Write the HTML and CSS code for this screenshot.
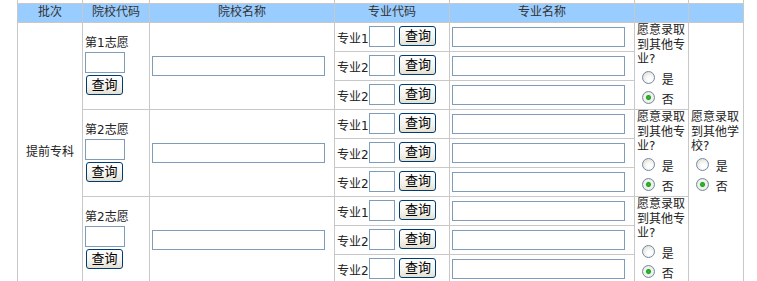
FILE: index.html
```html
<!DOCTYPE html>
<html lang="zh-CN">
<head>
  <meta charset="UTF-8">
  <title>志愿填报</title>
  <link rel="stylesheet" href="styles.css">
</head>
<body>

<div class="wrap">
<table class="form-table">
  <colgroup>
    <col class="c-batch">
    <col class="c-code">
    <col class="c-name">
    <col class="c-major">
    <col class="c-mname">
    <col class="c-adj">
    <col class="c-adj2">
  </colgroup>
  <tr class="gap"><td></td><td></td><td></td><td></td><td></td><td></td><td></td></tr>
  <tr class="head">
    <th>批次</th><th>院校代码</th><th>院校名称</th><th>专业代码</th><th>专业名称</th><th></th><th></th>
  </tr>

  <!-- 第1志愿 -->
  <tr class="sub">
    <td rowspan="9" class="batch">提前专科</td>
    <td rowspan="3" class="school"><span class="wish">第1志愿</span><input class="txt code"><button class="btn">查询</button></td>
    <td rowspan="3"><input class="txt wide"></td>
    <td><span class="lbl">专业1</span><input class="txt mini"> <button class="btn">查询</button></td>
    <td><input class="txt wide"></td>
    <td rowspan="3" class="choice">愿意录取到其他专业?<br>
      <input type="radio" name="adj1"> 是<br>
      <input type="radio" name="adj1" checked> 否
    </td>
    <td rowspan="9" class="choice">愿意录取到其他学校?<br>
      <input type="radio" name="other"> 是<br>
      <input type="radio" name="other" checked> 否
    </td>
  </tr>
  <tr class="sub">
    <td><span class="lbl">专业2</span><input class="txt mini"> <button class="btn">查询</button></td>
    <td><input class="txt wide"></td>
  </tr>
  <tr class="sub">
    <td><span class="lbl">专业2</span><input class="txt mini"> <button class="btn">查询</button></td>
    <td><input class="txt wide"></td>
  </tr>

  <!-- 第2志愿 -->
  <tr class="sub">
    <td rowspan="3" class="school"><span class="wish">第2志愿</span><input class="txt code"><button class="btn">查询</button></td>
    <td rowspan="3"><input class="txt wide"></td>
    <td><span class="lbl">专业1</span><input class="txt mini"> <button class="btn">查询</button></td>
    <td><input class="txt wide"></td>
    <td rowspan="3" class="choice">愿意录取到其他专业?<br>
      <input type="radio" name="adj2"> 是<br>
      <input type="radio" name="adj2" checked> 否
    </td>
  </tr>
  <tr class="sub">
    <td><span class="lbl">专业2</span><input class="txt mini"> <button class="btn">查询</button></td>
    <td><input class="txt wide"></td>
  </tr>
  <tr class="sub">
    <td><span class="lbl">专业2</span><input class="txt mini"> <button class="btn">查询</button></td>
    <td><input class="txt wide"></td>
  </tr>

  <!-- 第3志愿 -->
  <tr class="sub">
    <td rowspan="3" class="school"><span class="wish">第2志愿</span><input class="txt code"><button class="btn">查询</button></td>
    <td rowspan="3"><input class="txt wide"></td>
    <td><span class="lbl">专业1</span><input class="txt mini"> <button class="btn">查询</button></td>
    <td><input class="txt wide"></td>
    <td rowspan="3" class="choice">愿意录取到其他专业?<br>
      <input type="radio" name="adj3"> 是<br>
      <input type="radio" name="adj3" checked> 否
    </td>
  </tr>
  <tr class="sub">
    <td><span class="lbl">专业2</span><input class="txt mini"> <button class="btn">查询</button></td>
    <td><input class="txt wide"></td>
  </tr>
  <tr class="sub">
    <td><span class="lbl">专业2</span><input class="txt mini"> <button class="btn">查询</button></td>
    <td><input class="txt wide"></td>
  </tr>
</table>
</div>

</body>
</html>
```

FILE: styles.css
```css
* {
  box-sizing: border-box;
}

body {
  margin: 0;
  background: #fff;
  color: #222;
  font: 12px/15px "DejaVu Sans", "Noto Sans CJK SC", sans-serif;
}

.wrap {
  padding-left: 17px;
}

.form-table {
  border-collapse: collapse;
  table-layout: fixed;
  width: 726px;
}

.c-batch { width: 65px; }
.c-code { width: 67px; }
.c-name { width: 185px; }
.c-major { width: 115px; }
.c-mname { width: 185px; }
.c-adj { width: 54px; }
.c-adj2 { width: 55px; }

.form-table td,
.form-table th {
  border: 1px solid #c8c8c8;
  padding: 0 2px;
  vertical-align: middle;
  text-align: left;
  font-weight: normal;
}

.form-table .gap td {
  border-top: 0;
  height: 3px;
  padding: 0;
}

.form-table .head th {
  height: 19px;
  background: #99ccff;
  color: #333;
  text-align: center;
}

.form-table .sub {
  height: 29px;
}

.form-table .batch {
  text-align: center;
}

/* inputs */
.txt {
  margin: 0;
  padding: 0 2px;
  border: 1px solid #7f9db9;
  background: #fff;
  font: inherit;
  height: 21px;
  vertical-align: top;
}

.txt.wide {
  width: 173px;
  height: 20px;
  vertical-align: middle;
}

.txt.mini {
  width: 26px;
}

.txt.code {
  display: block;
  width: 40px;
  margin-top: 1px;
}

.lbl {
  vertical-align: bottom;
}

.btn {
  margin: 0 0 0 1px;
  padding: 0;
  width: 37px;
  height: 20px;
  border: 1px solid #003c74;
  border-radius: 3px;
  background: linear-gradient(#ffffff, #f4f3ee 60%, #e3e0d0);
  color: #000;
  font: 13px/16px "DejaVu Sans", "Noto Sans CJK SC", sans-serif;
  vertical-align: top;
}

.school .wish {
  display: block;
}

.school .btn {
  display: block;
  margin-top: 2px;
}

/* radios */
.choice {
  line-height: 14.5px;
}

.choice input[type="radio"] {
  appearance: none;
  -webkit-appearance: none;
  width: 13px;
  height: 13px;
  margin: 4px 3px 0 5px;
  border: 1px solid #7589a6;
  border-radius: 50%;
  background: radial-gradient(circle at 60% 65%, #ffffff 20%, #dcdcd4 90%);
  vertical-align: baseline;
}

.choice input[type="radio"]:checked {
  background: radial-gradient(circle, #3cb93c 0, #21a121 2px, #e2f3dd 3px, #f4f4ef 4px, #dcdcd4 90%);
}
```
